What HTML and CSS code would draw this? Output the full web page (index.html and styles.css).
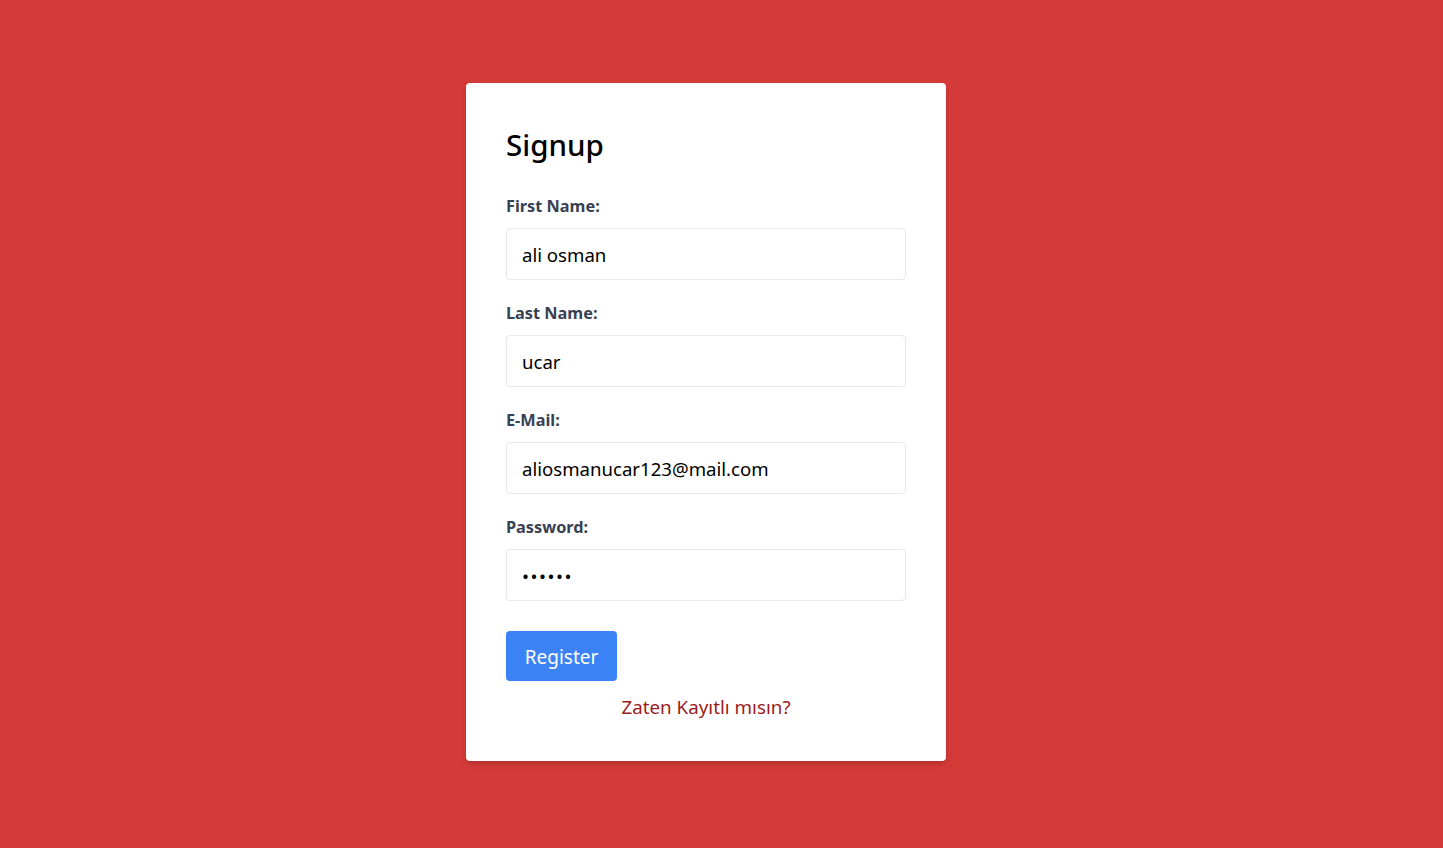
FILE: index.html
```html
<!DOCTYPE html>
<html lang="tr">
<head>
<meta charset="utf-8">
<title>Signup</title>
<link rel="stylesheet" href="styles.css">
</head>
<body>
<main class="page">
  <form class="card">
    <h1 class="title">Signup</h1>
    <div class="field">
      <label class="label" for="fn">First Name:</label>
      <input class="input" id="fn" type="text" value="ali osman">
    </div>
    <div class="field">
      <label class="label" for="ln">Last Name:</label>
      <input class="input" id="ln" type="text" value="ucar">
    </div>
    <div class="field">
      <label class="label" for="em">E-Mail:</label>
      <input class="input" id="em" type="email" value="aliosmanucar123@mail.com">
    </div>
    <div class="field">
      <label class="label" for="pw">Password:</label>
      <input class="input input-password" id="pw" type="password" value="123456">
    </div>
    <button class="btn" type="button">Register</button>
    <a class="link" href="#">Zaten Kayıtlı mısın?</a>
  </form>
</main>
</body>
</html>
```
FILE: styles.css
```css
* { box-sizing: border-box; }
html, body { margin: 0; padding: 0; }
body {
  background: #d43a38;
  font-family: "Noto Sans", "Open Sans", sans-serif;
  min-height: 848px;
}
.page {
  display: flex;
  justify-content: center;
  padding-top: 83px;
  padding-right: 31px;
}
.card {
  width: 480px;
  background: #fff;
  border-radius: 4px;
  padding: 40px;
  box-shadow: 0 4px 6px -1px rgba(0,0,0,0.12), 0 2px 4px -1px rgba(0,0,0,0.08);
  display: flex;
  flex-direction: column;
}
.title {
  margin: 0 0 31px;
  padding-top: 4px;
  font-size: 29.5px;
  line-height: 36px;
  font-weight: 500;
  color: #000;
}
.field {
  display: flex;
  flex-direction: column;
  margin-bottom: 21px;
}
.label {
  font-size: 16.3px;
  line-height: 24px;
  font-weight: 700;
  color: #374151;
  margin-bottom: 10px;
}
.input {
  height: 52px;
  border: 1px solid #e5e7eb;
  border-radius: 4px;
  padding: 0 15px;
  font-family: inherit;
  font-size: 18.6px;
  color: #000;
  outline: none;
}
.input-password {
  letter-spacing: 1.5px;
}
.btn {
  align-self: flex-start;
  margin-top: 9px;
  width: 111px;
  height: 50px;
  padding: 2px 0 0;
  background: #3b82f6;
  color: #fff;
  border: 0;
  border-radius: 4px;
  font-family: inherit;
  font-size: 19px;
}
.link {
  margin-top: 12px;
  text-align: center;
  font-size: 18.8px;
  line-height: 28px;
  color: #9b1c1c;
  text-decoration: none;
}
```
